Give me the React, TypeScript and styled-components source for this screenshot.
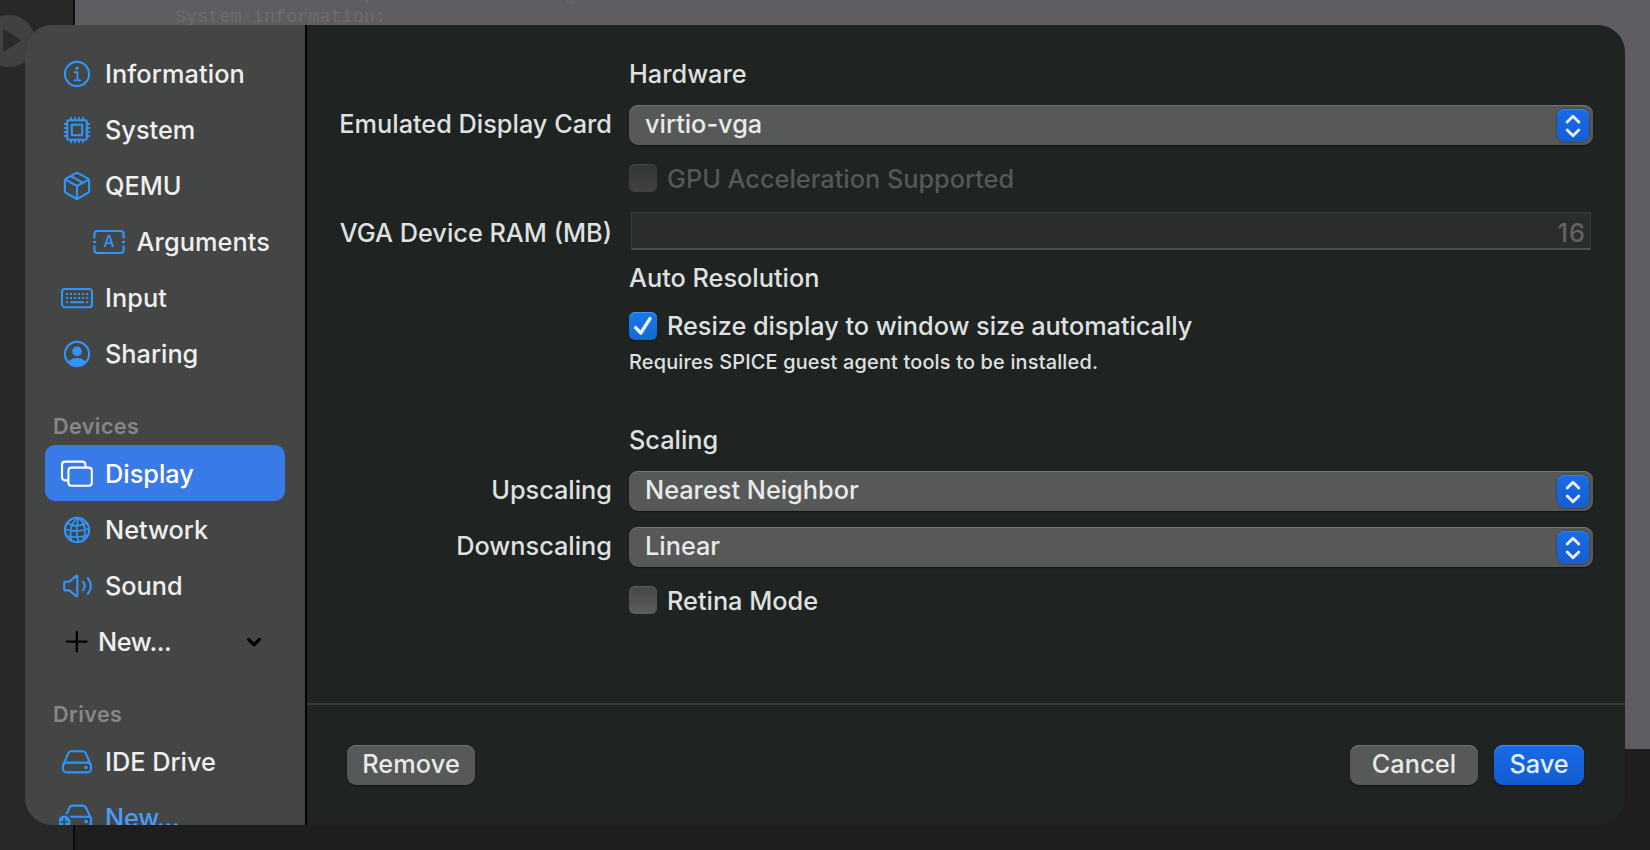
import React from 'react';
import styled, { createGlobalStyle, css } from 'styled-components';

const color = {
  blue: '#3096fb',
  sidebar: '#444645',
  panel: '#1f2322',
  text: '#dfe1e0',
  sidebarText: '#efefef',
  muted: '#858786',
  disabled: '#555857',
};

const GlobalStyle = createGlobalStyle`
  * { box-sizing: border-box; }
  html, body { margin: 0; padding: 0; background: #1e1e1e; }
  body {
    overflow: hidden;
    font-family: Inter, "Liberation Sans", sans-serif;
    font-size: 25.3px;
    font-weight: 450;
    line-height: 32px;
    letter-spacing: 0;
  }
`;

/* ---------- Host window behind the sheet ---------- */

const Screen = styled.div`
  position: relative;
  width: 1650px;
  height: 850px;
  overflow: hidden;
`;

const HostWindow = styled.div`
  display: flex;
  height: 100%;
`;

const HostSidebar = styled.div`
  width: 75px;
  padding-top: 15px;
  background: #282828;
  border-right: 2px solid #0c0c0c;
`;

const PlayButton = styled.div`
  display: flex;
  align-items: center;
  width: 52px;
  height: 52px;
  margin-left: -17px;
  padding-left: 20px;
  border-radius: 50%;
  background: #414141;
`;

const HostContent = styled.div`
  flex: 1;
  background: #1e1e1e;
`;

const Console = styled.pre`
  height: 749px;
  margin: 0;
  padding: 0 100px;
  overflow: hidden;
  background: #5f5d62;
  color: #6d6c70;
  font-family: "Liberation Mono", monospace;
  font-size: 18.55px;
  font-weight: 400;
  line-height: 23px;
  letter-spacing: 0;
`;

const ConsoleLine = styled.div<{ $first?: boolean }>`
  height: 23px;
  ${(p) => p.$first && css`margin-top: -17px;`}
`;

/* ---------- Sheet ---------- */

const Sheet = styled.div`
  position: absolute;
  inset: 25px;
  display: flex;
  overflow: hidden;
  border-radius: 27px;
  background: ${color.panel};
`;

const Sidebar = styled.nav`
  display: flex;
  flex-direction: column;
  width: 282px;
  padding: 20px 20px 0;
  overflow: hidden;
  background: ${color.sidebar};
  border-right: 2px solid #000;
  color: ${color.sidebarText};
`;

const NavItem = styled.a<{ $nested?: boolean; $active?: boolean; $accent?: boolean; $compact?: boolean }>`
  display: flex;
  flex: none;
  align-items: center;
  gap: ${(p) => (p.$compact ? 3 : 10)}px;
  width: 240px;
  height: 56px;
  padding-top: 2px;
  padding-left: ${(p) => (p.$nested ? 45.5 : 14)}px;
  padding-right: 23px;
  border-radius: 10px;
  white-space: nowrap;
  ${(p) => p.$active && css`background: #397be6; color: #fff;`}
  ${(p) => p.$accent && css`color: #4b9bf8;`}
`;

const NavIcon = styled.svg<{ $tone?: string }>`
  flex: none;
  width: 36px;
  height: 32px;
  fill: none;
  stroke: ${(p) => p.$tone ?? color.blue};
  stroke-width: 2.1;
  stroke-linecap: round;
  stroke-linejoin: round;
`;

const NavLabel = styled.span<{ $tracking?: number }>`
  flex: 1;
  letter-spacing: ${(p) => p.$tracking ?? 0}px;
`;

const NavHeader = styled.h3`
  flex: none;
  height: 64px;
  margin: 0;
  padding: 28.5px 0 0 8px;
  color: ${color.muted};
  font-size: 21.6px;
  font-weight: 600;
  letter-spacing: 0.4px;
`;

const Main = styled.main`
  display: flex;
  flex: 1;
  flex-direction: column;
  color: ${color.text};
`;

const Form = styled.form`
  height: 678px;
  padding: 33px 32px 0 0;
`;

const FormRow = styled.div<{ $gap?: number; $height?: number }>`
  display: grid;
  grid-template-columns: 305px 1fr;
  column-gap: 17px;
  height: ${(p) => p.$height ?? 32}px;
  margin-top: ${(p) => p.$gap ?? 0}px;
  white-space: nowrap;
`;

const FieldLabel = styled.label<{ $top?: number }>`
  grid-column: 1;
  padding-top: ${(p) => p.$top ?? 3}px;
  text-align: right;
`;

const Heading = styled.div`
  grid-column: 2;
`;

const Hint = styled.div`
  grid-column: 2;
  font-size: 19.9px;
  line-height: 24px;
  letter-spacing: 0.18px;
`;

const PopUp = styled.div`
  display: flex;
  grid-column: 2;
  justify-content: space-between;
  height: 40px;
  padding: 3px 4px 0 16px;
  border-radius: 9px;
  background: #575958;
  box-shadow: inset 0 1px 0 #747675, 0 1px 1px #121514;
  color: #e8e9e9;
`;

const PopUpArrows = styled.span`
  display: flex;
  align-items: center;
  justify-content: center;
  width: 32px;
  height: 33px;
  margin-top: 1px;
  border-radius: 8px;
  background: linear-gradient(#196be8, #145ed2);
  box-shadow: inset 0 1px 0 #3a82ee, 0 0 1px 1px rgba(20, 40, 80, 0.35);
`;

const NumberField = styled.div`
  grid-column: 2;
  height: 38px;
  margin: 0 2px 0 2px;
  padding: 4px 4px 0;
  border: 1px solid #3a3d3c;
  border-bottom: 2px solid #4d504f;
  background: #2a2d2c;
  color: #606362;
  text-align: right;
  letter-spacing: 1px;
`;

const CheckRow = styled.label<{ $disabled?: boolean; $tracking?: number }>`
  display: flex;
  grid-column: 2;
  align-items: center;
  gap: 10px;
  height: 28px;
  color: ${(p) => (p.$disabled ? color.disabled : 'inherit')};
  letter-spacing: ${(p) => p.$tracking ?? 0}px;
`;

const CheckText = styled.span<{ $drop?: boolean }>`
  padding-top: ${(p) => (p.$drop ? 2 : 0)}px;
`;

const boxLook = {
  off: css`
    background: linear-gradient(#444746, #5c5f5e);
    box-shadow: inset 0 1px 0 #5a5d5c;
  `,
  on: css`
    background: linear-gradient(#1a78ea, #1469d2);
    box-shadow: inset 0 1px 0 #4a93ef, 0 1px 1px #101a28;
  `,
  disabled: css`
    background: linear-gradient(#343736, #3f4241);
    box-shadow: inset 0 1px 0 #454847;
  `,
};

const Box = styled.span<{ $look: keyof typeof boxLook }>`
  display: flex;
  align-items: center;
  justify-content: center;
  width: 28px;
  height: 28px;
  border-radius: 6px;
  ${(p) => boxLook[p.$look]}
`;

const Footer = styled.footer`
  display: flex;
  flex: 1;
  gap: 16px;
  padding: 40px 41px 0 40px;
  border-top: 2px solid #363a39;
`;

const Spacer = styled.div`
  flex: 1;
`;

const Button = styled.button<{ $primary?: boolean; $width: number }>`
  width: ${(p) => p.$width}px;
  height: 40px;
  padding: 0 0 3px;
  border: 0;
  border-radius: 9px;
  background: #575958;
  box-shadow: inset 0 1px 0 #747675, 0 1px 1px #121514;
  color: #e8e9e9;
  font: inherit;
  letter-spacing: 0.1px;
  ${(p) =>
    p.$primary &&
    css`
      background: linear-gradient(#186ae8, #135cd0);
      box-shadow: inset 0 1px 0 #4c8ded, 0 1px 1px #10151c;
      color: #e3edfc;
      letter-spacing: -0.1px;
    `}
`;

/* ---------- Icons (drawn in a 36 x 32 slot, centre 18,16) ---------- */

const InfoIcon = () => (
  <NavIcon viewBox="0 0 36 32">
    <circle cx="18" cy="16" r="12.1" />
    <circle cx="18" cy="10.2" r="1.6" fill={color.blue} stroke="none" />
    <path d="M15.6 14.2H18.4V22M15.2 22.3H21.2" strokeWidth="1.8" />
  </NavIcon>
);

const CpuIcon = () => (
  <NavIcon viewBox="0 0 36 32">
    <rect x="8.2" y="6.2" width="19.6" height="19.6" rx="1.4" />
    <rect x="12.8" y="10.8" width="10.4" height="10.4" rx="0.4" />
    <path
      d="M12 6V3.7M16 6V3.7M20 6V3.7M24 6V3.7M12 28.3V26M16 28.3V26M20 28.3V26M24 28.3V26M8 10H5.7M8 14H5.7M8 18H5.7M8 22H5.7M30.3 10H28M30.3 14H28M30.3 18H28M30.3 22H28"
      strokeWidth="1.8"
    />
  </NavIcon>
);

const BoxIcon = () => (
  <NavIcon viewBox="0 0 36 32">
    <path d="M16.9 3.2Q18 2.6 19.1 3.2L29 8.7Q30.1 9.4 30.1 10.5V21Q30.1 22.2 29 22.8L18 29L7 22.8Q5.9 22.2 5.9 21V10.5Q5.9 9.4 7 8.7Z" />
    <path d="M6.4 9.6L18 16L29.6 9.6M18 16V28.6M12.4 6.3L23.8 12.7" strokeWidth="2" />
  </NavIcon>
);

const ArgumentsIcon = () => (
  <NavIcon viewBox="0 0 36 32">
    <path d="M3.4 12.6V8Q3.4 5 6.4 5H29.6Q32.6 5 32.6 8V12.6M32.6 19.4V24Q32.6 27 29.6 27H6.4Q3.4 27 3.4 24V19.4" strokeLinecap="butt" />
    <path d="M3.4 16H4M32 16H32.6" strokeWidth="2.4" />
    <text x="18" y="21.4" textAnchor="middle" fontSize="15.5" fontWeight="500" letterSpacing="0" fill={color.blue} stroke="none">
      A
    </text>
  </NavIcon>
);

const KeyboardIcon = () => (
  <NavIcon viewBox="0 0 36 32">
    <rect x="3" y="7" width="30" height="18.2" rx="2.8" />
    <path
      d="M7 12H9M11 12H13M15 12H17M19.2 12H21.2M23.2 12H25.2M27.2 12H29.2M7 16H9M11 16H13M15 16H17M19.2 16H21.2M23.2 16H25.2M27.2 16H29.2M7 20.2H9M11.4 20.2H25M27.2 20.2H29.2"
      strokeLinecap="butt"
    />
  </NavIcon>
);

const PersonIcon = () => (
  <NavIcon viewBox="0 0 36 32">
    <circle cx="18" cy="16" r="12.1" />
    <circle cx="18" cy="13.4" r="4.8" fill={color.blue} stroke="none" />
    <path d="M9.4 24Q12 20 18 20T26.6 24Q23 28.4 18 28.4T9.4 24Z" fill={color.blue} stroke="none" />
  </NavIcon>
);

const WindowsIcon = () => (
  <NavIcon viewBox="0 0 36 32" $tone="#fff">
    <rect x="9.4" y="9.6" width="23.4" height="18.2" rx="3" />
    <path d="M9.2 22.4H6.2Q3 22.4 3 19.2V6.8Q3 3.6 6.2 3.6H23.2Q26.4 3.6 26.4 6.8V9.4" strokeLinecap="butt" />
  </NavIcon>
);

const GlobeIcon = () => (
  <NavIcon viewBox="0 0 36 32">
    <circle cx="18" cy="16" r="12.1" />
    <path
      d="M20 4C13 7 9.6 15.6 12.6 26.6M20 4C17 11 17 20 19.6 28M20 4C25.6 9 27.4 17 24.4 26M8.4 9.2C14 12.6 22 12.4 27.6 8.8M6 15.2C13 17.6 23 17.4 30 14.8M7.6 22C14 23.4 22 23.2 28.4 21.4"
      strokeWidth="1.7"
    />
  </NavIcon>
);

const SpeakerIcon = () => (
  <NavIcon viewBox="0 0 36 32">
    <path d="M5.2 12.8Q5.2 11.8 6.2 11.8H10.2L17.2 5.9Q18.3 5.2 18.3 6.6V25.4Q18.3 26.8 17.2 26.1L10.2 20.4H6.2Q5.2 20.4 5.2 19.4Z" />
    <path d="M24 11.8Q27.4 16 24 20.2M28.8 8Q35 16 28.8 24" />
  </NavIcon>
);

const PlusIcon = () => (
  <NavIcon viewBox="0 0 36 32" $tone="#000">
    <path d="M8 15.6H27.6M17.8 6V25.4" strokeWidth="2.3" />
  </NavIcon>
);

const ChevronDown = styled.svg`
  flex: none;
  width: 16px;
  height: 12px;
  fill: none;
  stroke: #000;
  stroke-width: 3.2;
  stroke-linecap: round;
  stroke-linejoin: round;
`;

const driveBody = (
  <>
    <path d="M4.2 19L9.3 7.2Q10.2 5.3 12.2 5.3H23.8Q25.8 5.3 26.7 7.2L31.8 19" />
    <rect x="4" y="16.6" width="28" height="9.8" rx="3.6" />
    <circle cx="27" cy="21.5" r="1.8" fill={color.blue} stroke="none" />
  </>
);

const DriveIcon = () => <NavIcon viewBox="0 0 36 32">{driveBody}</NavIcon>;

const NewDriveIcon = () => (
  <NavIcon viewBox="0 0 36 32">
    <path d="M7.4 12.4L10.6 5.4Q11.4 3.6 13.4 3.6H24Q26 3.6 26.9 5.5L32 16.4V21Q32 24 29 24H12M11 14.8H31" />
    <circle cx="27.2" cy="19.6" r="1.8" fill={color.blue} stroke="none" />
    <circle cx="5.2" cy="20" r="8" fill={color.sidebar} stroke="none" />
    <circle cx="5.2" cy="20" r="6.4" fill={color.blue} stroke="none" />
    <path d="M5.2 16.8V23.2M2 20H8.4" stroke={color.sidebar} strokeWidth="1.7" />
  </NavIcon>
);

const Arrows = () => (
  <PopUpArrows>
    <svg width="18" height="26" viewBox="0 0 18 26" fill="none" stroke="#e6effd" strokeWidth="2.9" strokeLinecap="round" strokeLinejoin="round">
      <path d="M3.2 9L9 3.2L14.8 9M3.2 17L9 22.8L14.8 17" />
    </svg>
  </PopUpArrows>
);

const Select = ({ value }: { value: string }) => (
  <PopUp>
    {value}
    <Arrows />
  </PopUp>
);

export default function App() {
  return (
    <Screen>
      <GlobalStyle />
      <HostWindow>
        <HostSidebar>
          <PlayButton>
            <svg width="20" height="24" viewBox="0 0 20 24">
              <path d="M0 1.6Q0 0 1.6 .8L17 10.4Q18.6 11.4 17 12.4L1.6 22Q0 22.8 0 21.2Z" fill="#2a2a2a" />
            </svg>
          </PlayButton>
        </HostSidebar>
        <HostContent>
          <Console>
            <ConsoleLine $first>{' '.repeat(17) + 'p' + ' '.repeat(17) + 'g'}</ConsoleLine>
            <ConsoleLine>System information:</ConsoleLine>
          </Console>
        </HostContent>
      </HostWindow>

      <Sheet>
        <Sidebar>
          <NavItem><InfoIcon /><NavLabel $tracking={0.1}>Information</NavLabel></NavItem>
          <NavItem><CpuIcon /><NavLabel>System</NavLabel></NavItem>
          <NavItem><BoxIcon /><NavLabel>QEMU</NavLabel></NavItem>
          <NavItem $nested><ArgumentsIcon /><NavLabel $tracking={0.1}>Arguments</NavLabel></NavItem>
          <NavItem><KeyboardIcon /><NavLabel $tracking={0.1}>Input</NavLabel></NavItem>
          <NavItem><PersonIcon /><NavLabel>Sharing</NavLabel></NavItem>
          <NavHeader>Devices</NavHeader>
          <NavItem $active><WindowsIcon /><NavLabel>Display</NavLabel></NavItem>
          <NavItem><GlobeIcon /><NavLabel>Network</NavLabel></NavItem>
          <NavItem><SpeakerIcon /><NavLabel>Sound</NavLabel></NavItem>
          <NavItem $compact>
            <PlusIcon />
            <NavLabel $tracking={-0.4}>New...</NavLabel>
            <ChevronDown viewBox="0 0 16 12"><path d="M2.6 3.4L8 8.8L13.4 3.4" /></ChevronDown>
          </NavItem>
          <NavHeader>Drives</NavHeader>
          <NavItem><DriveIcon /><NavLabel>IDE Drive</NavLabel></NavItem>
          <NavItem $accent><NewDriveIcon /><NavLabel $tracking={-0.2}>New...</NavLabel></NavItem>
        </Sidebar>

        <Main>
          <Form>
            <FormRow><Heading>Hardware</Heading></FormRow>
            <FormRow $gap={15} $height={40}>
              <FieldLabel>Emulated Display Card</FieldLabel>
              <Select value="virtio-vga" />
            </FormRow>
            <FormRow $gap={19} $height={28}>
              <CheckRow $disabled><Box $look="disabled" /><CheckText $drop>GPU Acceleration Supported</CheckText></CheckRow>
            </FormRow>
            <FormRow $gap={20} $height={38}>
              <FieldLabel $top={5}>VGA Device RAM (MB)</FieldLabel>
              <NumberField>16</NumberField>
            </FormRow>
            <FormRow $gap={12}><Heading>Auto Resolution</Heading></FormRow>
            <FormRow $gap={18} $height={28}>
              <CheckRow $tracking={-0.05}>
                <Box $look="on">
                  <svg width="22" height="22" viewBox="0 0 22 22" fill="none" stroke="#eaf2fe" strokeWidth="3.4" strokeLinecap="round" strokeLinejoin="round">
                    <path d="M3.6 12.6L8.8 18L18 3.6" />
                  </svg>
                </Box>
                <CheckText>Resize display to window size automatically</CheckText>
              </CheckRow>
            </FormRow>
            <FormRow $gap={10} $height={24}>
              <Hint>Requires SPICE guest agent tools to be installed.</Hint>
            </FormRow>
            <FormRow $gap={50}><Heading>Scaling</Heading></FormRow>
            <FormRow $gap={15} $height={40}>
              <FieldLabel>Upscaling</FieldLabel>
              <Select value="Nearest Neighbor" />
            </FormRow>
            <FormRow $gap={16} $height={40}>
              <FieldLabel>Downscaling</FieldLabel>
              <Select value="Linear" />
            </FormRow>
            <FormRow $gap={19} $height={28}>
              <CheckRow><Box $look="off" /><CheckText $drop>Retina Mode</CheckText></CheckRow>
            </FormRow>
          </Form>
          <Footer>
            <Button $width={128}>Remove</Button>
            <Spacer />
            <Button $width={128}>Cancel</Button>
            <Button $width={90} $primary>Save</Button>
          </Footer>
        </Main>
      </Sheet>
    </Screen>
  );
}
